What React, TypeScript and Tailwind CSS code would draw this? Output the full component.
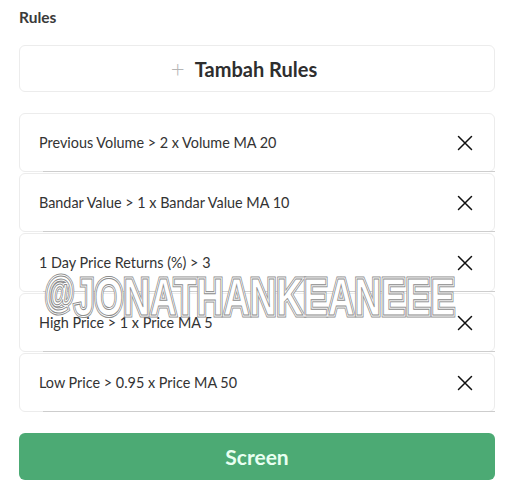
import React from "react";

const rules = [
  "Previous Volume > 2 x Volume MA 20",
  "Bandar Value > 1 x Bandar Value MA 10",
  "1 Day Price Returns (%) > 3",
  "High Price > 1 x Price MA 5",
  "Low Price > 0.95 x Price MA 50",
];

function CloseIcon() {
  return (
    <svg width="16" height="16" viewBox="0 0 16 16" fill="none" stroke="#111" strokeWidth="1.5" strokeLinecap="round">
      <path d="M1.5 1.5 L14.5 14.5 M14.5 1.5 L1.5 14.5" />
    </svg>
  );
}

function Mark({ cls }: { cls: string }) {
  return (
    <span className={cls}>
      <span className="relative top-[-8px] text-[42px]">@</span>
      JONATHANKEANEEE
    </span>
  );
}

export default function App() {
  return (
    <div className="relative w-[515px] h-[483px] bg-white px-[19px] pr-[20px] font-['Lato','Liberation_Sans',sans-serif] text-[#333]">
      <div className="pt-[6px] h-[45px] text-[15.5px] font-bold text-[#3a3a3a]">Rules</div>

      <button className="w-full h-[47px] flex items-center justify-center gap-[10px] pr-[26px] border border-[#ececec] rounded-md bg-white">
        <span className="text-[24px] font-light text-[#b5b5b5] leading-none -mt-[2px]">+</span>
        <span className="text-[20px] font-bold text-[#2e2e2e]">Tambah Rules</span>
      </button>

      <div className="mt-[21px] flex flex-col gap-[1px]">
        {rules.map((r) => (
          <div key={r} className="relative h-[59px] flex items-center justify-between pl-[19px] pr-[21px] border border-[#ececec] rounded-md bg-white">
            <span className="text-[14.4px] text-[#333]">{r}</span>
            <CloseIcon />
            <span className="absolute bottom-[-1px] left-[23px] right-[-1px] h-px bg-[#cdcdcd]" />
          </div>
        ))}
      </div>

      <button className="mt-[21px] w-full h-[47px] rounded-md bg-[#4caa74] text-[#e8fff1] text-[21px] font-bold">
        Screen
      </button>

      {/* watermark */}
      <div className="pointer-events-none absolute left-[45px] top-[280px] font-['Liberation_Sans',sans-serif] font-bold text-[52px] leading-[34px] origin-left [transform:scaleX(0.71)] whitespace-nowrap">
        <Mark cls="absolute left-0 top-0 text-transparent [-webkit-text-stroke:5px_#8c8c8c]" />
        <Mark cls="absolute left-0 top-0 text-transparent [-webkit-text-stroke:3px_#ffffff]" />
        <Mark cls="relative text-white [-webkit-text-stroke:1px_#8c8c8c]" />
      </div>
    </div>
  );
}
